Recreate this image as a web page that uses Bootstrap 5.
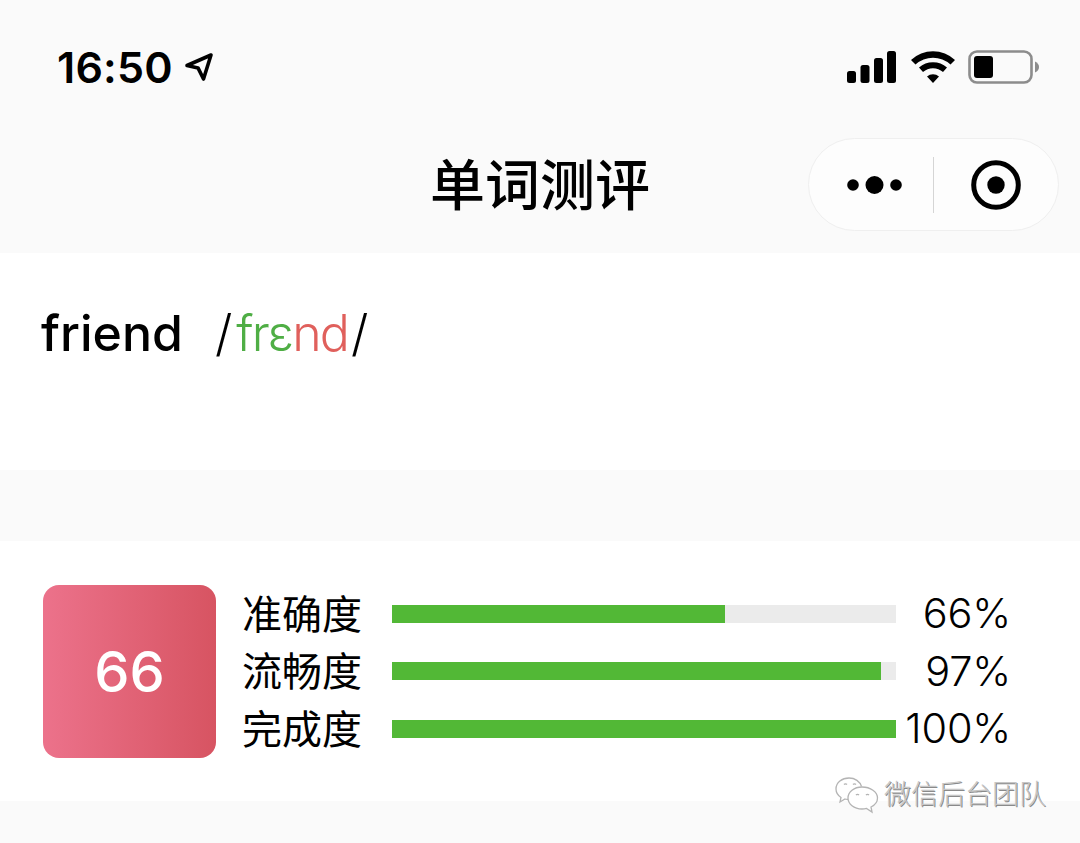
<!DOCTYPE html>
<html lang="zh">
<head>
<meta charset="utf-8">
<title>单词测评</title>
<link href="https://cdn.jsdelivr.net/npm/bootstrap@5.3.0/dist/css/bootstrap.min.css" rel="stylesheet">
<style>
html,body{height:843px;overflow:hidden}
body{background:#fafafa;color:#000;font-family:"Liberation Sans","Noto Sans CJK SC",sans-serif;position:relative;width:1080px}
.app-head{height:253px;background:#fafafa}
.status-row{height:120px;padding:14px 40px 0 57px}
.clock{font-family:Inter,"Liberation Sans",sans-serif;font-size:43px;font-weight:600;line-height:1;letter-spacing:.2px}
.status-arrow{margin-left:11px}
.status-icons{gap:13.500px}
.title-row{height:133px;padding-right:21px}
.page-title{position:absolute;left:0;right:0;top:149px;text-align:center;font-size:55px;font-weight:500;line-height:64px;margin:0;font-family:"Noto Sans CJK SC",sans-serif}
.capsule{width:251px;height:93px;margin-top:18px;background:#fdfdfd;border:1px solid #efefef;border-radius:47px}
.capsule-side{flex:1 1 0}
.dots-icon{margin-left:8px}
.capsule-rule{width:1px;height:56px;background:#d5d5d5}
.word-panel{height:217px;background:#fff;padding:49px 41px 0}
.word{font-size:50px;font-weight:500;line-height:62px;font-family:Inter,"Liberation Sans",sans-serif;margin-right:32px}
.phon{font-size:50px;line-height:62px;font-family:Inter,"Liberation Sans",sans-serif;font-weight:300}
.slash-a{margin-right:4px}
.ipa{letter-spacing:-1.900px;margin-right:3px}
.ok{color:#4fae45}.bad{color:#e0605c}
.gap-band{height:71px}
.score-panel{height:260px;background:#fff;padding:44px 69px 0 43px}
.score-box{width:173px;height:173px;border-radius:16px;background:linear-gradient(90deg,#ec728b,#d75462);color:#fff;font-size:56px;font-weight:500;font-family:Inter,"Liberation Sans",sans-serif}
.metrics{margin-left:26px;flex:1}
.metric{height:57.500px}
.metric-name{width:150px;font-size:40px;line-height:1;margin-bottom:4px;font-family:"Noto Sans CJK SC",sans-serif;font-weight:400}
.metric-track{width:504px;height:18px;background:#ebebeb;border-radius:0}
.metric-track .progress-bar{background:#52b836}
.metric-val{flex:1;text-align:right;font-size:41.500px;line-height:1;font-family:Inter,"Liberation Sans",sans-serif;font-weight:300;letter-spacing:-.2px}
.watermark{position:absolute;left:835px;top:776px;color:#c6c6c6;font-size:27px;line-height:38px;font-family:"Noto Sans CJK SC",sans-serif;font-weight:300;text-shadow:1px 1px 0 #8a8a8a;gap:5px}
.watermark span{margin-top:-4px}
</style>
</head>
<body>
<header class="app-head">
  <div class="status-row d-flex align-items-center justify-content-between">
    <div class="d-flex align-items-center">
      <span class="clock">16:50</span>
      <svg width="30" height="30" viewBox="0 0 30 30" fill="none" stroke="#000" stroke-width="3.600" stroke-linejoin="round" class="status-arrow"><path d="M27 3 3 13.500l11 2.400 5.500 11.100z"/></svg>
    </div>
    <div class="status-icons d-flex align-items-center">
      <svg width="50" height="32" viewBox="0 0 50 32"><g fill="#000"><rect x="0" y="20" width="9" height="12" rx="2.500"/><rect x="13.500" y="14" width="9" height="18" rx="2.500"/><rect x="27" y="7" width="9" height="25" rx="2.500"/><rect x="40" y="0" width="9" height="32" rx="2.500"/></g></svg>
      <svg width="44" height="32" viewBox="0 0 44 32"><path d="M22 32 16 25.500a9 9 0 0 1 12 0zM12 21 8 16.500a21 21 0 0 1 28 0L32 21a15 15 0 0 0-20 0zM4.500 13.500 0 9a32 32 0 0 1 44 0l-4.500 4.500a26 26 0 0 0-35 0z" fill="#000"/></svg>
      <svg width="72" height="34" viewBox="0 0 72 34"><rect x="1.500" y="1.500" width="62" height="31" rx="7.500" fill="none" stroke="#8c8c8c" stroke-width="2.600"/><rect x="6" y="6" width="19" height="22" rx="3" fill="#000"/><path d="M67 11.500q4 2 4 5.500t-4 5.500z" fill="#8c8c8c"/></svg>
    </div>
  </div>
  <div class="title-row d-flex justify-content-end">
    <h1 class="page-title">单词测评</h1>
    <div class="capsule d-flex align-items-center position-relative">
      <div class="capsule-side d-flex justify-content-center">
        <svg class="dots-icon" width="56" height="20" viewBox="0 0 56 20"><g fill="#000"><circle cx="6" cy="10" r="5.800"/><circle cx="27.500" cy="10" r="9"/><circle cx="49" cy="10" r="5.800"/></g></svg>
      </div>
      <div class="capsule-rule"></div>
      <div class="capsule-side d-flex justify-content-center">
        <svg width="50" height="50" viewBox="0 0 50 50"><circle cx="25" cy="25" r="22.300" fill="none" stroke="#000" stroke-width="5"/><circle cx="25" cy="25" r="8.700" fill="#000"/></svg>
      </div>
    </div>
  </div>
</header>
<section class="word-panel d-flex align-items-start">
  <span class="word">friend</span>
  <span class="phon"><span class="slash-a">/</span><span class="ipa"><span class="ok">frɛ</span><span class="bad">nd</span></span>/</span>
</section>
<div class="gap-band"></div>
<section class="score-panel d-flex align-items-start">
  <div class="score-box d-flex align-items-center justify-content-center">66</div>
  <div class="metrics">
    <div class="metric d-flex align-items-center"><span class="metric-name">准确度</span><div class="progress metric-track rounded-0"><div class="progress-bar" style="width:66%"></div></div><span class="metric-val">66%</span></div>
    <div class="metric d-flex align-items-center"><span class="metric-name">流畅度</span><div class="progress metric-track rounded-0"><div class="progress-bar" style="width:97%"></div></div><span class="metric-val">97%</span></div>
    <div class="metric d-flex align-items-center"><span class="metric-name">完成度</span><div class="progress metric-track rounded-0"><div class="progress-bar" style="width:100%"></div></div><span class="metric-val">100%</span></div>
  </div>
</section>
<div class="watermark d-flex align-items-center">
  <svg width="44" height="38" viewBox="0 0 44 38" fill="#fff" stroke="#b4b4b4" stroke-width="1.300"><path d="M14 2C7 2 1 6.500 1 13c0 3.500 2 6.500 5 8.500L5 26l5-3c1 .3 2 .4 3 .5"/><path d="M14 2c6 0 11 3.500 12.500 8.500"/><path d="M27 11c-8 0-14 5-14 11s6 11 14 11c1.500 0 3-.2 4.500-.6L37 36l-1-5c4-2 6.500-5.500 6.500-9 0-6-7-11-15.500-11z"/><path d="M9 8.500a2 2 0 0 1 3 0M18 8.500a2 2 0 0 1 3 0M21 19a2 2 0 0 1 3 0M31 19a2 2 0 0 1 3 0" fill="none"/></svg>
  <span>微信后台团队</span>
</div>
</body>
</html>
